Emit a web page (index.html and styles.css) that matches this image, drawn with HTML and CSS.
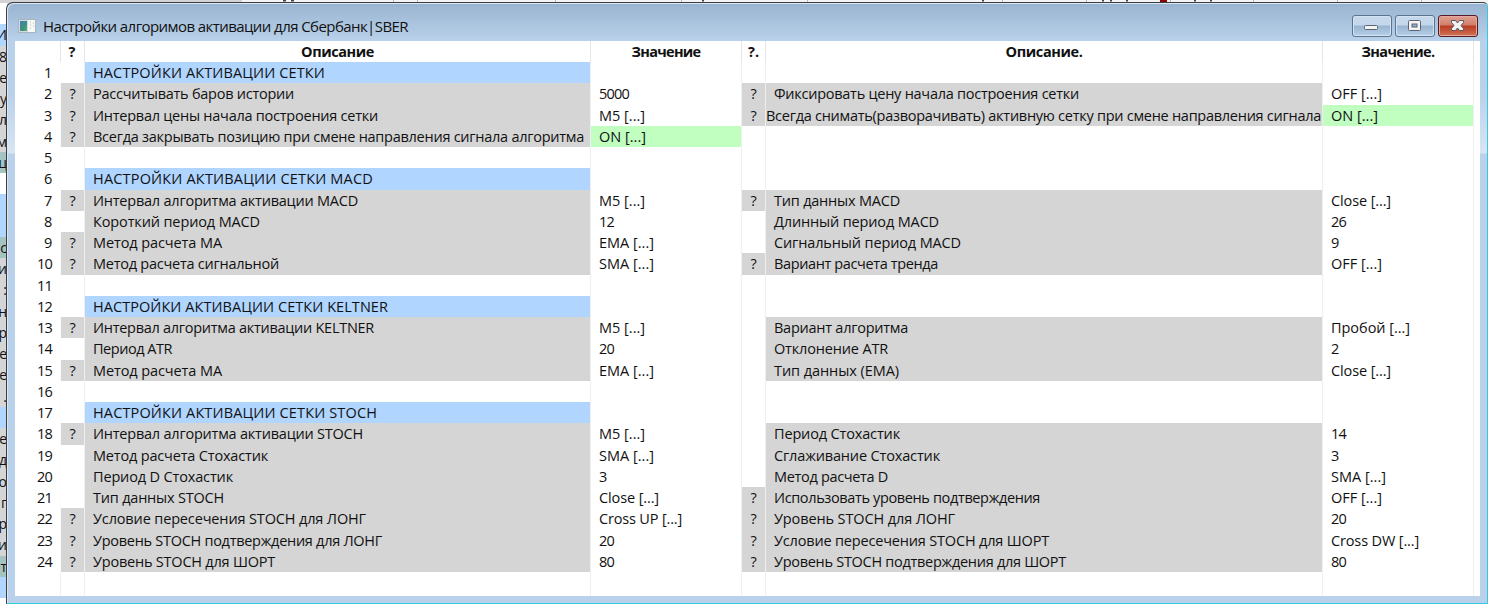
FILE: index.html
```html
<!DOCTYPE html>
<html lang="ru">
<head>
<meta charset="utf-8">
<title>Настройки</title>
<link rel="stylesheet" href="styles.css">
</head>
<body>
<div class="desktop">
  <div class="backdrop" id="backdrop"></div>
  <svg class="topstrip" width="1488" height="3"><rect width="1488" height="3" fill="#f4f4f4"/><rect width="242" height="3" fill="#d3d3d3"/><path d="M283 0h3M291 0h3M702 0h2M1102 0h2M1110 0h2M1126 0h2M1194 0h2M1210 0h2M982 0h2" stroke="#444" stroke-width="3"/><path d="M393 0h1M417 0h1M555 0h1M681 0h1M807 0h1M1002 0h1M1086 0h1M1170 0h1M1253 0h1M1337 0h1M1421 0h1" stroke="#bbb" stroke-width="5"/><rect x="1160" width="7" height="3" fill="#8b0000"/></svg>
  <div class="window">
    <header class="titlebar">
      <svg class="appicon" width="18" height="14" viewBox="0 0 18 14"><rect x=".5" y=".5" width="17" height="13" fill="#f7f9f8" stroke="#a9b5bd"/><rect x="1" y="1" width="9" height="12" fill="#cfdde0"/><rect x="2" y="2" width="7" height="10" fill="#3f8f83"/><path d="M2 2h4l-4 7z" fill="#467db5"/><path d="M6 12l3-7v7z" fill="#57a56c"/><path d="M12 3h1M12 6h1M12 9h1M15 4h1M15 7h1" stroke="#aebbb8"/></svg>
      <span class="title fit" data-w="365">Настройки алгоримов активации для Сбербанк|SBER</span>
      <div class="buttons">
        <span class="btn"><svg width="38" height="20"><rect x="11.5" y="9.500" width="13" height="4" rx="1" fill="#f4f4f4" stroke="#5b6470"/></svg></span>
        <span class="btn"><svg width="38" height="20"><rect x="12.5" y="4.500" width="12" height="10" rx="1" fill="#f4f4f4" stroke="#5b6470"/><rect x="16" y="8" width="5" height="3" fill="#8eb0d4" stroke="#5b6470"/></svg></span>
        <span class="btn close"><svg width="38" height="20"><path d="M12.500 4.500h4l2 2.500 2-2.500h4v2l-2.500 3 2.500 3v2h-4l-2-2.500-2 2.500h-4v-2l2.500-3-2.500-3z" fill="#f2f2f2" stroke="#5d5660"/></svg></span>
      </div>
    </header>
    <main class="grid" id="grid"></main>
  </div>
</div>
<script src="app.js"></script>
</body>
</html>
```
FILE: styles.css
```css
* { box-sizing: border-box; }
body { margin: 0; width: 1488px; height: 604px; overflow: hidden; font: 14px/21px "Open Sans", "Noto Sans", sans-serif; color: #111; }
.desktop { position: relative; width: 1488px; height: 604px; background: #d5d5d5; overflow: hidden; }
.backdrop { position: absolute; left: 0; top: 3px; width: 7px; height: 601px; overflow: hidden; }
.strip { height: 21.25px; line-height: 21px; white-space: nowrap; direction: rtl; }
.strip.white { background: #fff; }
.strip.blue { background: #b0d5ff; }
.strip.teal { background: #a5c4c1; }
.topstrip { position: absolute; left: 0; top: 0; }
.window { position: absolute; left: 6px; top: 2px; width: 1482px; height: 602px; border: 1px solid #3a3f44; border-right-color: #38c8df; border-bottom-color: #38c8df; border-radius: 7px 5px 0 0; background: linear-gradient(#99b4d1, #b9d1ea 38px, #b9d1ea 90px, #d8e5f3 150px, #b9d1ea 151px); padding: 0 7px 6px 8px; box-shadow: inset 1px 1px 0 #dce6ee; }
.titlebar { height: 38px; display: flex; align-items: flex-start; }
.appicon { margin: 16px 0 0 3px; flex: none; }
.title { margin: 13px 0 0 7px; font-size: 15px; }
.buttons { margin: 12px 2px 0 auto; display: flex; gap: 3px; }
.btn { width: 40px; height: 22px; border: 1px solid #5b7590; border-radius: 3px; background: linear-gradient(#c5d8eb 0 45%, #98b4d1 50%, #b8d0e8); box-shadow: inset 0 0 0 1px #d5e3f1; }
.btn svg { display: block; }
.close { border-color: #571b25; background: linear-gradient(#e0a090, #d17f6c 45%, #b93c23 50%, #ce7254); box-shadow: inset 0 0 0 1px #e4aaa0; }
.grid { height: 555px; background: #fff; overflow: hidden; display: grid; grid-template-columns: 46px 24px 506px 151px 24px 557px 151px; grid-template-rows: 21px repeat(24, 21.25px) 24px; }
.cell { border-right: 1px solid #efefef; white-space: nowrap; overflow: hidden; padding-left: 8px; min-width: 0; font-size: 14.5px; line-height: 21px; }
.cell.num { text-align: right; padding-right: 8px; border-color: #fbfbfb; }
.cell.q { padding: 0; text-align: center; }
.cell.head { font-weight: 700; text-align: center; padding: 0; border-color: #e5e5e5; }
.cell.tight { padding-left: 0; }
.gray { background: #d5d5d5; }
.blue { background: #b0d5ff; }
.green { background: #c0ffc0; }
.fit { display: inline-block; white-space: nowrap; }
```
FILE: app.js
```js
// [help, description, width, value, value width] for the left and right halves of a row
const rows = [
  [['', 'НАСТРОЙКИ АКТИВАЦИИ СЕТКИ', 232], null],
  [['?', 'Рассчитывать баров истории', 201, '5000', 30], ['?', 'Фиксировать цену начала построения сетки', 305, 'OFF [...]', 51]],
  [['?', 'Интервал цены начала построения сетки', 285, 'M5 [...]', 46], ['?', 'Всегда снимать(разворачивать) активную сетку при смене направления сигнала', 555, 'ON [...]', 47]],
  [['?', 'Всегда закрывать позицию при смене направления сигнала алгоритма', 491, 'ON [...]', 47], null],
  [null, null],
  [['', 'НАСТРОЙКИ АКТИВАЦИИ СЕТКИ MACD', 280], null],
  [['?', 'Интервал алгоритма активации MACD', 265, 'M5 [...]', 46], ['?', 'Тип данных MACD', 126, 'Close [...]', 60]],
  [['', 'Короткий период MACD', 167, '12', 15], ['', 'Длинный период MACD', 165, '26', 15]],
  [['?', 'Метод расчета MA', 129, 'EMA [...]', 55], ['', 'Сигнальный период MACD', 187, '9', 8]],
  [['?', 'Метод расчета сигнальной', 186, 'SMA [...]', 55], ['?', 'Вариант расчета тренда', 164, 'OFF [...]', 51]],
  [null, null],
  [['', 'НАСТРОЙКИ АКТИВАЦИИ СЕТКИ KELTNER', 295], null],
  [['?', 'Интервал алгоритма активации KELTNER', 281, 'M5 [...]', 46], ['', 'Вариант алгоритма', 134, 'Пробой [...]', 79]],
  [['', 'Период ATR', 79, '20', 15], ['', 'Отклонение ATR', 114, '2', 8]],
  [['?', 'Метод расчета MA', 129, 'EMA [...]', 55], ['', 'Тип данных (EMA)', 125, 'Close [...]', 60]],
  [null, null],
  [['', 'НАСТРОЙКИ АКТИВАЦИИ СЕТКИ STOCH', 284], null],
  [['?', 'Интервал алгоритма активации STOCH', 270, 'M5 [...]', 46], ['', 'Период Стохастик', 126, '14', 15]],
  [['', 'Метод расчета Стохастик', 175, 'SMA [...]', 55], ['', 'Сглаживание Стохастик', 166, '3', 8]],
  [['', 'Период D Стохастик', 140, '3', 8], ['', 'Метод расчета D', 114, 'SMA [...]', 55]],
  [['', 'Тип данных STOCH', 131, 'Close [...]', 60], ['?', 'Использовать уровень подтверждения', 266, 'OFF [...]', 51]],
  [['?', 'Условие пересечения STOCH для ЛОНГ', 273, 'Cross UP [...]', 83], ['?', 'Уровень STOCH для ЛОНГ', 181, '20', 15]],
  [['?', 'Уровень STOCH подтверждения для ЛОНГ', 289, '20', 15], ['?', 'Условие пересечения STOCH для ШОРТ', 275, 'Cross DW [...]', 88]],
  [['?', 'Уровень STOCH для ШОРТ', 182, '80', 15], ['?', 'Уровень STOCH подтверждения для ШОРТ', 292, '80', 15]]
];
const grid = document.getElementById('grid');
function add(cls, text, width) {
  const c = document.createElement('div');
  c.className = 'cell ' + cls;
  if (text) {
    const s = document.createElement('span');
    s.textContent = text;
    if (width) { s.className = 'fit'; s.dataset.w = width; }
    c.append(s);
  }
  grid.append(c);
}
[['', 0], ['?', 8], ['Описание', 73], ['Значение', 69], ['?.', 11], ['Описание.', 77], ['Значение.', 73]]
  .forEach(([t, w]) => add('head', t, w));
rows.forEach((row, i) => {
  add('num', String(i + 1), i < 9 ? 8 : 15);
  row.forEach(half => {
    if (!half) { add('q'); add(''); add(''); return; }
    const [q, text, w, val, vw] = half;
    add('q' + (q ? ' gray' : ''), q, q && 6);
    add((val ? 'gray' : 'blue') + (w > 550 ? ' tight' : ''), text, w);
    add(val === 'ON [...]' ? 'green' : '', val, vw);
  });
});
for (let i = 0; i < 7; i++) add('');
document.querySelectorAll('.fit').forEach(s => {
  const natural = s.getBoundingClientRect().width;
  s.style.letterSpacing = (s.dataset.w - natural) / s.textContent.length + 'px';
});
// Slice of the table visible behind the window
const back = document.getElementById('backdrop');
[['white', ''], ['blue', 'И'], ['', '8'], ['', 'е'], ['', 'у'], ['', 'л'], ['', 'м'], ['teal', 'ц'], ['white', ''],
 ['blue', ''], ['blue', ''], ['teal', 'с'], ['', 'и'], ['', ':'], ['', 'н'], ['', 'р'], ['', 'е'], ['', 'е'], ['', '.'],
 ['blue', ''], ['', 'е'], ['', 'д'], ['', 'о'], ['', 'г'], ['', 'р'], ['', 'и'], ['teal', 'т'], ['blue', ''], ['white', '']]
  .forEach(([c, t]) => { const d = document.createElement('div'); d.className = 'strip ' + c; d.textContent = t; back.append(d); });
```
